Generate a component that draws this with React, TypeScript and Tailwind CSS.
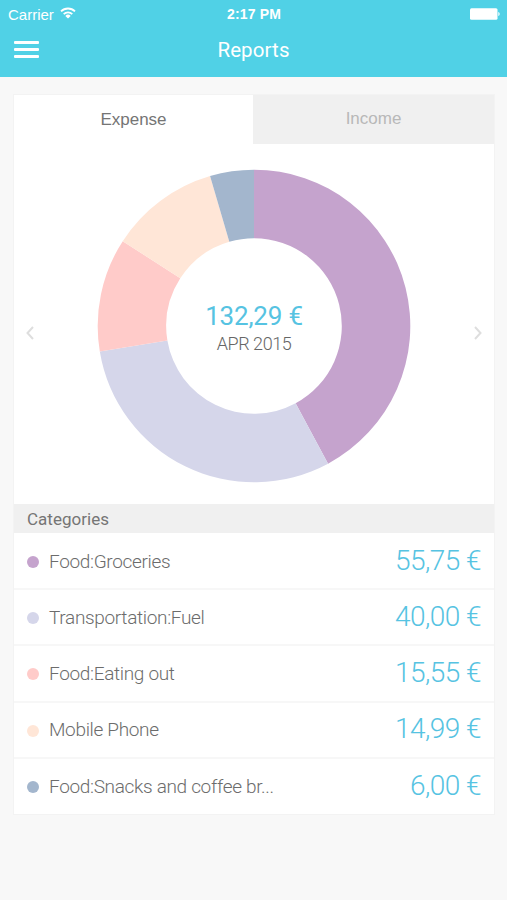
import React from "react";

interface Category {
  name: string;
  amount: number;
  color: string;
}

const categories: Category[] = [
  { name: "Food:Groceries", amount: 55.75, color: "#c5a3cd" },
  { name: "Transportation:Fuel", amount: 40.0, color: "#d5d6ea" },
  { name: "Food:Eating out", amount: 15.55, color: "#ffcbc9" },
  { name: "Mobile Phone", amount: 14.99, color: "#ffe6d7" },
  { name: "Food:Snacks and coffee br...", amount: 6.0, color: "#a3b6cd" },
];

const total = categories.reduce((sum, c) => sum + c.amount, 0);

const formatEuro = (value: number) => `${value.toFixed(2).replace(".", ",")} €`;

// Ring segment between two fractions of the full turn, starting at 12 o'clock
const ringPath = (from: number, to: number, outer: number, inner: number) => {
  const point = (fraction: number, r: number) => {
    const a = fraction * 2 * Math.PI;
    return `${(r * Math.sin(a)).toFixed(2)} ${(-r * Math.cos(a)).toFixed(2)}`;
  };
  const large = to - from > 0.5 ? 1 : 0;
  return `M${point(from, outer)}A${outer} ${outer} 0 ${large} 1 ${point(to, outer)}L${point(to, inner)}A${inner} ${inner} 0 ${large} 0 ${point(from, inner)}Z`;
};

const StatusBar = () => (
  <div className="grid h-7 grid-cols-3 items-center pr-[7px] pl-2 font-['Liberation_Sans',sans-serif] text-white">
    <div className="flex items-center gap-[6px]">
      <span className="text-[15px] leading-none">Carrier</span>
      <svg className="-mt-[3px]" width="16" height="12" viewBox="0 0 16 12" fill="none" stroke="currentColor" strokeWidth="1.8">
        <path d="M1 4.4a9.9 9.9 0 0 1 14 0" />
        <path d="M3.7 7.2a6.1 6.1 0 0 1 8.6 0" />
        <path d="M8 11.6 5.3 8.9a3.8 3.8 0 0 1 5.4 0Z" fill="currentColor" stroke="none" />
      </svg>
    </div>
    <span className="text-center text-[14px] leading-none font-bold tracking-[0.15px]">2:17 PM</span>
    <svg className="-mt-px justify-self-end" width="30" height="12" viewBox="0 0 30 12" fill="currentColor">
      <rect x="0" y="0.2" width="27.5" height="11.6" rx="1.5" />
      <path d="M28.3 4c1.8.6 1.8 3.400 0 4Z" />
    </svg>
  </div>
);

const Header = () => (
  <header className="h-[77px] bg-[#50d1e6]">
    <StatusBar />
    <div className="grid h-[43px] grid-cols-[60px_1fr_60px] items-center text-white">
      <button className="ml-[14px] flex w-[25px] flex-col gap-1" aria-label="Menu">
        <span className="h-[3px] w-full rounded-[1px] bg-white" />
        <span className="h-[3px] w-full rounded-[1px] bg-white" />
        <span className="h-[3px] w-full rounded-[1px] bg-white" />
      </button>
      <h1 className="pt-[2px] text-center text-[20.5px] leading-none tracking-[0.1px]">Reports</h1>
    </div>
  </header>
);

const Tabs = () => (
  <div className="grid h-[49px] grid-cols-[239px_1fr] font-['Liberation_Sans',sans-serif] text-[17px]">
    <button className="pt-px text-[#757575]">Expense</button>
    <button className="bg-[#f0f0f0] pb-px text-[#b8b8b8]">Income</button>
  </div>
);

const Arrow: React.FC<{ d: string }> = ({ d }) => (
  <svg className="mt-[17px]" width="8" height="14" viewBox="0 0 8 14" fill="none" stroke="#dedede" strokeWidth="2">
    <path d={d} />
  </svg>
);

const DonutChart = () => {
  let start = 0;
  return (
    <div className="grid h-[360px] grid-cols-[83px_314px_1fr] items-center">
      <div className="pl-3">
        <Arrow d="M7 1 1.500 7 7 13" />
      </div>
      <div className="relative mt-[3px] h-[314px]">
        <svg width="314" height="314" viewBox="-157 -157 314 314">
          {categories.map((c) => {
            const from = start;
            start += c.amount / total;
            return <path key={c.name} d={ringPath(from, start, 156.3, 87.8)} fill={c.color} />;
          })}
        </svg>
        <div className="absolute inset-0 flex flex-col items-center justify-center pt-[6px]">
          <span className="text-[26px] leading-[30px] tracking-[-0.2px] text-[#56c3e2]">{formatEuro(total)}</span>
          <span className="text-[18px] leading-[26px] font-light tracking-[-0.45px] text-[#666]">APR 2015</span>
        </div>
      </div>
      <div className="flex justify-end pr-3">
        <Arrow d="M1 1 6.500 7 1 13" />
      </div>
    </div>
  );
};

const CategoryRow: React.FC<{ category: Category }> = ({ category }) => (
  <li className="flex h-[56.200px] items-center border-b-2 border-[#f7f7f7] pt-[2px] pr-[13px] pl-[13px] font-light last:h-[55px] last:border-b-0">
    <span className="size-3 rounded-full" style={{ backgroundColor: category.color }} />
    <span className="ml-[10px] flex-1 text-[19px] tracking-[-0.33px] text-[#6c6c6c]">{category.name}</span>
    <span className="-mt-[3px] text-[28px] leading-none tracking-[-0.55px] text-[#56c3e2]">{formatEuro(category.amount)}</span>
  </li>
);

const App = () => (
  <div className="h-[900px] w-[507px] overflow-hidden bg-[#f8f8f8] font-[Roboto,sans-serif]">
    <Header />
    <main className="mr-3 ml-[13px] mt-[17px] border border-[#f3f3f3] bg-white">
      <Tabs />
      <DonutChart />
      <h2 className="flex h-[29px] items-center bg-[#f0f0f0] pt-[2px] pl-[13px] text-[17px] tracking-[0.03px] text-[#757575]">Categories</h2>
      <ul className="pt-px">
        {categories.map((c) => (
          <CategoryRow key={c.name} category={c} />
        ))}
      </ul>
    </main>
  </div>
);

export default App;
